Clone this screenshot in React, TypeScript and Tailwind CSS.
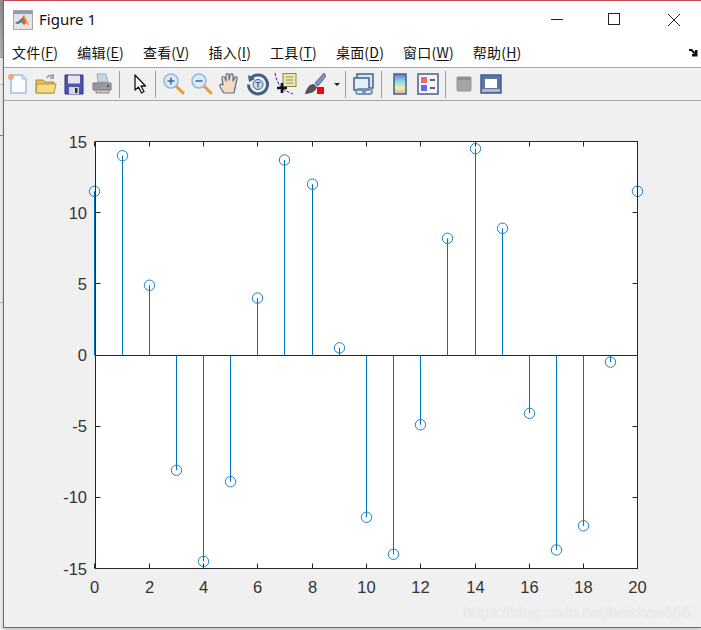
import type { ReactNode } from "react";

const menus = [
  { label: "文件", key: "F" },
  { label: "编辑", key: "E" },
  { label: "查看", key: "V" },
  { label: "插入", key: "I" },
  { label: "工具", key: "T" },
  { label: "桌面", key: "D" },
  { label: "窗口", key: "W" },
  { label: "帮助", key: "H" },
];

const values = [11.5, 14, 4.9, -8.1, -14.5, -8.9, 4, 13.7, 12, 0.5, -11.4, -14, -4.9, 8.2, 14.5, 8.9, -4.1, -13.7, -12, -0.5, 11.5];
const xTicks = [0, 2, 4, 6, 8, 10, 12, 14, 16, 18, 20];
const yTicks = [-15, -10, -5, 0, 5, 10, 15];

// axes box in page pixels
const left = 95.5;
const right = 637.5;
const top = 141.5;
const bottom = 568.5;
// snap to the pixel grid so the stems stay solid
const px = (v: number) => Math.floor(94.9 + v * 27.15) + 0.5;
const py = (v: number) => bottom - ((v + 15) / 30) * (bottom - top);
const pyLine = (v: number) => Math.floor(py(v)) + 0.5;

function Btn({ children }: { children: ReactNode }) {
  return <div className="flex h-[32px] w-[28px] shrink-0 items-center justify-center">{children}</div>;
}

function Sep({ className }: { className: string }) {
  return (
    <div className={`flex h-[32px] shrink-0 items-center justify-center ${className}`}>
      <div className="h-[27px] w-px bg-[#a0a0a0]" />
    </div>
  );
}

function Icon({ children }: { children: ReactNode }) {
  return (
    <svg width="24" height="24" viewBox="0 0 24 24" fill="none">
      {children}
    </svg>
  );
}

function MatlabLogo() {
  return (
    <svg width="20" height="20" viewBox="0 0 20 20">
      <rect x="0.5" y="0.5" width="19" height="19" fill="#e4e4e6" stroke="#a6a6a8" />
      <rect x="1" y="1" width="18" height="3" fill="#8a9cb4" />
      <path d="M2 13l4-2 3-3 2-3 5 10-3-2-2 2-3-3-3 2z" fill="#d9622a" />
      <path d="M2 13l4-2 3-3 1 3-3 2-2 1z" fill="#3f86b8" />
      <path d="M11 5l5 10-3-2-2-5z" fill="#efa23a" />
    </svg>
  );
}

function Plot() {
  return (
    <svg className="block h-[526px] w-[697px]" viewBox="4 101 697 526" fontFamily="'Liberation Sans', Arial, sans-serif">
      <rect x={left} y={top} width={right - left} height={bottom - top} fill="#fff" />
      {xTicks.map((t) => (
        <g key={t}>
          <line x1={px(t)} x2={px(t)} y1={bottom} y2={bottom - 5} stroke="#262626" />
          <line x1={px(t)} x2={px(t)} y1={top} y2={top + 5} stroke="#262626" />
          <text x={px(t)} y={593} textAnchor="middle" fontSize="16.5" fill="#333">
            {t}
          </text>
        </g>
      ))}
      {yTicks.map((t) => (
        <g key={t}>
          <line x1={left} x2={left + 5} y1={pyLine(t)} y2={pyLine(t)} stroke="#262626" />
          <line x1={right} x2={right - 5} y1={pyLine(t)} y2={pyLine(t)} stroke="#262626" />
          <text x={87} y={py(t) + 6} textAnchor="end" fontSize="16.5" fill="#333">
            {t}
          </text>
        </g>
      ))}
      <line x1={left} x2={right} y1={pyLine(0)} y2={pyLine(0)} stroke="#262626" />
      {values.map((v, i) => (
        <g key={i}>
          <line x1={px(i)} x2={px(i)} y1={pyLine(0)} y2={py(v)} stroke="#0072bd" />
          <circle cx={px(i)} cy={py(v)} r="5.2" fill="none" stroke="#1b80c4" />
        </g>
      ))}
      <rect x={left} y={top} width={right - left} height={bottom - top} fill="none" stroke="#262626" />
    </svg>
  );
}

export default function App() {
  return (
    <div className="flex h-[630px] w-[701px] overflow-hidden bg-white">
      {/* bit of desktop showing left of the window */}
      <div className="flex h-[630px] w-[3px] shrink-0 flex-col bg-[#efefef]">
        <div className="h-[57px] bg-gradient-to-b from-[#8f8f8f] to-[#b4b4b4]" />
        <div className="h-px bg-[#999]" />
        <div className="mt-[26px] h-px bg-[#c4c4c4]" />
        <div className="mt-[50px] h-px bg-[#8a8a8a]" />
        <div className="mt-[166px] h-px bg-[#b8b8b8]" />
      </div>
      <div className="relative flex h-[628px] w-[698px] flex-col border-t border-b border-l border-[#c8474f] bg-[#f0f0f0] shadow-[0_2px_3px_rgba(0,0,0,0.25)] font-['Noto_Sans','Noto_Sans_CJK_SC',sans-serif]">
        {/* title bar */}
        <div className="flex h-[37px] shrink-0 items-center bg-white pl-[9px]">
          <MatlabLogo />
          <span className="ml-[6px] text-[15px] text-[#111]">Figure 1</span>
          <svg width="150" height="16" viewBox="0 0 150 16" className="ml-auto" fill="none" stroke="#222">
            <line x1="0" x2="12" y1="7.5" y2="7.5" />
            <rect x="57.5" y="1.5" width="11" height="11" />
            <path d="M117 2l12 12M129 2l-12 12" />
          </svg>
        </div>
        {/* menu bar */}
        <div className="flex h-[30px] shrink-0 items-center gap-[19px] border-b border-[#a9a9a9] bg-white pl-[8px] text-[14px] tracking-[0.2px] text-[#111]">
          {menus.map((m) => (
            <span key={m.key} className="font-['Noto_Sans_CJK_SC','Noto_Sans',sans-serif]">
              {m.label}(<span className="underline underline-offset-2">{m.key}</span>)
            </span>
          ))}
          <svg width="9" height="8" viewBox="0 0 9 8" className="ml-auto mr-[3px]">
            <path d="M0 0h3l3 3V1h2.500v6.500H3V5h2L2 2H0z" fill="#111" />
          </svg>
        </div>
        {/* toolbar */}
        <div className="flex h-[33px] shrink-0 items-center border-b border-[#a9a9a9] bg-[#f0f0f0]">
          <Btn>
            <Icon>
              <path d="M5 3h11l4 4v14H5z" fill="#fbfdff" stroke="#9cc0e0" strokeWidth="1.5" />
              <path d="M16 3v4h4" fill="#dbe9f5" stroke="#9cc0e0" />
              <circle cx="5" cy="5" r="3" fill="#f3a47a" />
            </Icon>
          </Btn>
          <Btn>
            <Icon>
              <path d="M2 8h7l2 2h9v11H2z" fill="#e8c15a" stroke="#a98a35" />
              <path d="M3 12h19l-2 9H2z" fill="#f6dc84" stroke="#b39538" />
              <path d="M13 6c1-3 4-3 6-2M19 2v4h-3" stroke="#7b9bb8" strokeWidth="1.5" />
            </Icon>
          </Btn>
          <Btn>
            <Icon>
              <path d="M3 3h18v19H3z" fill="#4f55a8" stroke="#2f3577" />
              <rect x="6" y="3.500" width="12" height="8" fill="#e4e6f4" />
              <rect x="7" y="15" width="10" height="7" fill="#d8d8e2" />
              <rect x="13" y="16" width="2.500" height="5" fill="#333" />
            </Icon>
          </Btn>
          <Btn>
            <Icon>
              <path d="M7 2h9l2 8H8z" fill="#c8d6e4" stroke="#98a8b8" />
              <path d="M3 11h18v7H3z" fill="#9a9a9a" stroke="#777" />
              <path d="M6 18h13v3H6z" fill="#c8c8c8" stroke="#888" />
              <circle cx="18" cy="14" r="1" fill="#444" />
            </Icon>
          </Btn>
          <Sep className="w-[7px]" />
          <div className="w-[2px] shrink-0" />
          <Btn>
            <Icon>
              <path d="M8 3v15l3.500-3 3 6 2.500-1.500-3-5.500h4.500z" fill="#fff" stroke="#111" strokeWidth="1.3" strokeLinejoin="round" />
            </Icon>
          </Btn>
          <Sep className="w-[5px]" />
          <div className="w-[2px] shrink-0" />
          <Btn>
            <Icon>
              <path d="M14 14l7 7" stroke="#e79b3d" strokeWidth="3" strokeLinecap="round" />
              <circle cx="9" cy="9" r="7" fill="#dcebf7" stroke="#90b8d4" strokeWidth="1.6" />
              <path d="M5.500 9h7M9 5.500v7" stroke="#3f6d9c" strokeWidth="1.6" />
            </Icon>
          </Btn>
          <Btn>
            <Icon>
              <path d="M14 14l7 7" stroke="#e79b3d" strokeWidth="3" strokeLinecap="round" />
              <circle cx="9" cy="9" r="7" fill="#dcebf7" stroke="#90b8d4" strokeWidth="1.6" />
              <path d="M5.500 9h7" stroke="#3f6d9c" strokeWidth="1.6" />
            </Icon>
          </Btn>
          <Btn>
            <Icon>
              <path d="M6 21c-2-3-5-6-4-8s3 0 3 0L4 6c0-2 2-2 3 0l1 3V3c0-2 3-2 3 0v5l1-5c1-2 3-1 3 0v6l2-4c1-1 3 0 2 2l-2 9-1 5z" fill="#f7d9c0" stroke="#5a6f8c" strokeWidth="1.2" strokeLinejoin="round" />
            </Icon>
          </Btn>
          <Btn>
            <Icon>
              <path d="M5 6a9.500 9.500 0 1 1-2.500 6.500" stroke="#3f5f88" strokeWidth="3" />
              <path d="M2 3l1 7 6-3z" fill="#3f5f88" />
              <circle cx="12" cy="12.500" r="5" fill="#c8d8e8" stroke="#3f5f88" />
              <path d="M9.500 10.500h5M12 10.500v5" stroke="#3f5f88" strokeWidth="1.2" />
            </Icon>
          </Btn>
          <Btn>
            <Icon>
              <rect x="9" y="1.500" width="13" height="13" fill="#eee9b0" stroke="#8b8a50" />
              <path d="M11.500 5h8M11.500 8h8M11.500 11h8" stroke="#9a9860" />
              <path d="M1 1c1 7 4 13 9 17l9 4" stroke="#2222dd" strokeDasharray="3 1.500" />
              <path d="M8 11v10M3 16h10" stroke="#111" strokeWidth="2.6" />
            </Icon>
          </Btn>
          <Btn>
            <Icon>
              <path d="M22 1l-9 10 3 3 8-10z" fill="#8090c8" stroke="#5a6aa0" />
              <path d="M12 12c-5 0-8 5-9 10 4 0 11-2 12-7z" fill="#555" />
              <rect x="15" y="15" width="7" height="7" fill="#f00" />
            </Icon>
          </Btn>
          <div className="flex w-[14px] shrink-0 justify-center pl-[3px]">
            <div className="h-0 w-0 border-x-[3px] border-t-[3px] border-x-transparent border-t-[#222]" />
          </div>
          <Sep className="w-[7px]" />
          <div className="w-px shrink-0" />
          <Btn>
            <Icon>
              <rect x="5" y="2" width="16" height="14" fill="#dce6f0" stroke="#44608a" strokeWidth="1.5" />
              <rect x="2" y="6" width="15" height="12" fill="#e6eef6" stroke="#44608a" strokeWidth="1.5" />
              <rect x="4" y="17" width="9" height="5" rx="2.500" stroke="#7892b0" strokeWidth="2" />
              <rect x="11" y="17" width="9" height="5" rx="2.500" stroke="#7892b0" strokeWidth="2" />
            </Icon>
          </Btn>
          <Sep className="w-[6px]" />
          <div className="w-[2px] shrink-0" />
          <Btn>
            <svg width="24" height="24" viewBox="0 0 24 24">
              <defs>
                <linearGradient id="cb" x1="0" y1="0" x2="0" y2="1">
                  <stop offset="0" stopColor="#6a78d8" />
                  <stop offset="0.4" stopColor="#8fe0e8" />
                  <stop offset="0.7" stopColor="#eef0a0" />
                  <stop offset="1" stopColor="#eeaaa0" />
                </linearGradient>
              </defs>
              <rect x="6" y="2" width="12" height="20" fill="url(#cb)" stroke="#44608a" strokeWidth="1.5" />
            </svg>
          </Btn>
          <Btn>
            <Icon>
              <rect x="2" y="2" width="20" height="20" fill="#f4f6fa" stroke="#44608a" strokeWidth="1.5" />
              <rect x="5" y="5" width="6" height="6" fill="#ea6a6a" />
              <rect x="5" y="13" width="6" height="6" fill="#6a6ae0" />
              <path d="M14 8h5M14 16h5" stroke="#333" strokeWidth="1.5" />
            </Icon>
          </Btn>
          <Sep className="w-[6px]" />
          <div className="w-[2px] shrink-0" />
          <Btn>
            <Icon>
              <rect x="5" y="5" width="14" height="14" rx="1" fill="#a4a4a4" stroke="#929292" />
              <rect x="5" y="5" width="14" height="3" fill="#909090" />
            </Icon>
          </Btn>
          <div className="-ml-px">
            <Btn>
              <Icon>
                <rect x="2" y="3" width="20" height="18" fill="#5a74a4" stroke="#44608a" strokeWidth="1.5" />
                <rect x="6" y="7" width="12" height="9" fill="#fff" />
                <rect x="3" y="17" width="18" height="3" fill="#b8b8b8" />
              </Icon>
            </Btn>
          </div>
        </div>
        {/* figure area */}
        <Plot />
        <span className="absolute bottom-[2px] right-[10px] font-['Liberation_Sans',sans-serif] text-[15.8px] text-white/70 [text-shadow:0_0_1px_#c8c8c8]">
          https://blog.csdn.net/haichao666
        </span>
      </div>
    </div>
  );
}
